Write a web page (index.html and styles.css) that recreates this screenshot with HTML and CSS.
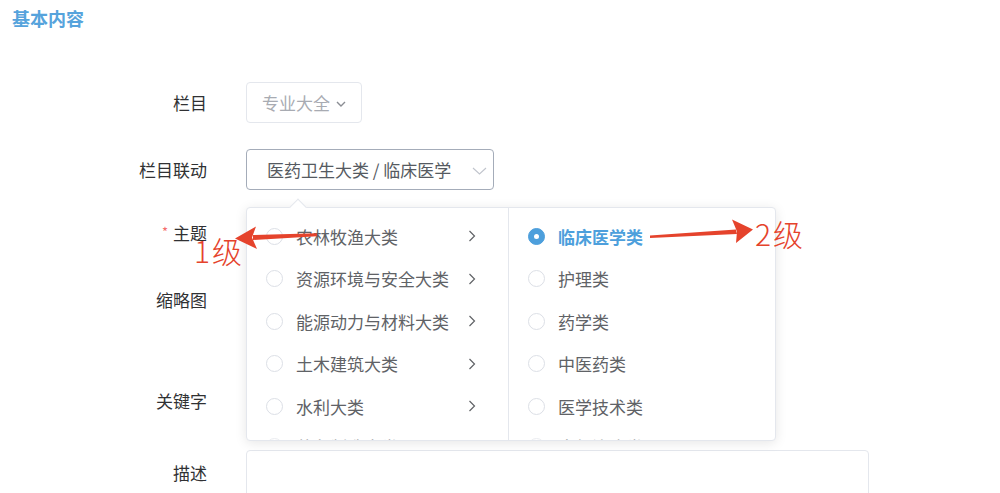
FILE: index.html
```html
<!DOCTYPE html>
<html lang="zh-CN">
<head>
<meta charset="utf-8">
<title>基本内容</title>
<link rel="stylesheet" href="styles.css">
</head>
<body>
<div class="page">
  <h2 class="section-title">基本内容</h2>
  <div class="form">
    <div class="row r1">
      <div class="label">栏目</div>
      <div class="control">
        <div class="select select-small">
          <span class="placeholder">专业大全</span>
          <svg class="chev-small" width="10" height="6" viewBox="0 0 10 6"><path d="M1 1 L5 5 L9 1" fill="none" stroke="#8a8d93" stroke-width="1.4"/></svg>
        </div>
      </div>
    </div>
    <div class="row r2">
      <div class="label">栏目联动</div>
      <div class="control">
        <div class="select select-wide">
          <span class="value">医药卫生大类 / 临床医学</span>
          <svg class="chev-wide" width="15" height="8" viewBox="0 0 15 8"><path d="M1 1 L7.5 7 L14 1" fill="none" stroke="#c0c4cc" stroke-width="1.1"/></svg>
        </div>
      </div>
    </div>
    <div class="row r3">
      <div class="label"><span class="req">*</span>主题</div>
      <div class="control"></div>
    </div>
    <div class="row r4">
      <div class="label">缩略图</div>
      <div class="control"></div>
    </div>
    <div class="row r5">
      <div class="label">关键字</div>
      <div class="control"></div>
    </div>
    <div class="row r6">
      <div class="label">描述</div>
      <div class="control"><div class="textarea"></div></div>
    </div>
  </div>

  <div class="cascader">
    <div class="popper-arrow"></div>
    <div class="menu menu-left">
      <div class="item"><span class="radio"></span><span class="text">农林牧渔大类</span><svg class="chev-right" width="8" height="12" viewBox="0 0 8 12"><path d="M1.5 1 L6.5 6 L1.5 11" fill="none" stroke="#606266" stroke-width="1.2"/></svg></div>
      <div class="item"><span class="radio"></span><span class="text">资源环境与安全大类</span><svg class="chev-right" width="8" height="12" viewBox="0 0 8 12"><path d="M1.5 1 L6.5 6 L1.5 11" fill="none" stroke="#606266" stroke-width="1.2"/></svg></div>
      <div class="item"><span class="radio"></span><span class="text">能源动力与材料大类</span><svg class="chev-right" width="8" height="12" viewBox="0 0 8 12"><path d="M1.5 1 L6.5 6 L1.5 11" fill="none" stroke="#606266" stroke-width="1.2"/></svg></div>
      <div class="item"><span class="radio"></span><span class="text">土木建筑大类</span><svg class="chev-right" width="8" height="12" viewBox="0 0 8 12"><path d="M1.5 1 L6.5 6 L1.5 11" fill="none" stroke="#606266" stroke-width="1.2"/></svg></div>
      <div class="item"><span class="radio"></span><span class="text">水利大类</span><svg class="chev-right" width="8" height="12" viewBox="0 0 8 12"><path d="M1.5 1 L6.5 6 L1.5 11" fill="none" stroke="#606266" stroke-width="1.2"/></svg></div>
      <div class="item"><span class="radio"></span><span class="text">装备制造大类</span><svg class="chev-right" width="8" height="12" viewBox="0 0 8 12"><path d="M1.5 1 L6.5 6 L1.5 11" fill="none" stroke="#606266" stroke-width="1.2"/></svg></div>
    </div>
    <div class="menu menu-right">
      <div class="item active"><span class="radio checked"></span><span class="text">临床医学类</span></div>
      <div class="item"><span class="radio"></span><span class="text">护理类</span></div>
      <div class="item"><span class="radio"></span><span class="text">药学类</span></div>
      <div class="item"><span class="radio"></span><span class="text">中医药类</span></div>
      <div class="item"><span class="radio"></span><span class="text">医学技术类</span></div>
      <div class="item"><span class="radio"></span><span class="text">康复治疗类</span></div>
    </div>
  </div>

  <svg class="annot" width="1000" height="493" viewBox="0 0 1000 493">
    <path d="M317 233.2 L253 235 L253 240 L317 236.2 Z" fill="#e5432c"/>
    <path d="M235 238.5 L256 226.5 L252 237.5 L257 249 Z" fill="#e5432c"/>
    <path d="M650 235.5 L736 229.5 L737 234 L650 238 Z" fill="#e5432c"/>
    <path d="M753 229.5 L732 219.5 L737 231.5 L736 243 Z" fill="#e5432c"/>
  </svg>
  <span class="note note-1">1级</span>
  <span class="note note-2">2级</span>
</div>
</body>
</html>
```

FILE: styles.css
```css
* { box-sizing: border-box; }

html, body {
  margin: 0;
  padding: 0;
  background: #ffffff;
}

body {
  font-family: "Noto Sans CJK SC", "Noto Sans", sans-serif;
  color: #303133;
  overflow: hidden;
}

.page {
  position: relative;
  width: 1000px;
  height: 493px;
  overflow: hidden;
}

.section-title {
  margin: 0;
  padding: 6px 0 0 12px;
  font-size: 18px;
  line-height: 24px;
  font-weight: 700;
  color: #56a3dc;
}

.form {
  margin-top: 52px;
  display: flex;
  flex-direction: column;
  gap: 22px;
}

.row {
  display: flex;
  align-items: flex-start;
}

.label {
  width: 207px;
  margin-right: 39px;
  text-align: right;
  font-size: 17px;
  line-height: 42px;
  color: #303133;
  flex-shrink: 0;
}

.req {
  color: #f56c6c;
  font-size: 13px;
  margin-right: 5px;
  position: relative;
  top: -3px;
}

.control {
  flex: 1;
}

.r1 { height: 45px; }
.r1 .label { line-height: 41px; }
.r2 { height: 41px; }
.r3 { height: 45px; }
.r4 { height: 79px; }
.r5 { height: 48px; }
.r6 .label { line-height: 46px; }

.select {
  display: flex;
  align-items: center;
  background: #fff;
  border-radius: 4px;
  font-size: 17px;
}

.select-small {
  width: 116px;
  height: 41px;
  border: 1px solid #e4e7ed;
  padding-left: 15px;
}

.placeholder {
  color: #a8abb2;
}

.chev-small {
  margin-left: 6px;
  margin-top: 2px;
}

.select-wide {
  width: 248px;
  height: 41px;
  border: 1px solid #a4acb9;
  padding-left: 20px;
  padding-right: 6px;
  justify-content: space-between;
}

.value {
  color: #555a61;
}

.chev-wide {
  margin-top: 2px;
}

.textarea {
  width: 623px;
  height: 90px;
  border: 1px solid #e4e7ed;
  border-radius: 4px;
}

.cascader {
  position: absolute;
  left: 246px;
  top: 207px;
  width: 530px;
  height: 234px;
  background: #fff;
  border: 1px solid #e4e7ed;
  border-radius: 4px;
  box-shadow: 0 2px 12px rgba(0, 0, 0, 0.1);
  display: flex;
}

.popper-arrow {
  position: absolute;
  left: 45px;
  top: -7px;
  width: 12px;
  height: 12px;
  background: #fff;
  border-left: 1px solid #e4e7ed;
  border-top: 1px solid #e4e7ed;
  transform: rotate(45deg);
}

.menu {
  height: 100%;
  overflow: hidden;
  padding-top: 7px;
  position: relative;
}

.menu-left {
  width: 262px;
  border-right: 1px solid #e4e7ed;
}

.menu-right {
  flex: 1;
}

.item {
  display: flex;
  align-items: center;
  height: 42.5px;
  padding-left: 19px;
  font-size: 17px;
  color: #606266;
}

.item:last-child {
  margin-top: -2px;
  opacity: 0.6;
}

.menu-left .item {
  padding-right: 32px;
}

.menu-right .item {
  padding-left: 19px;
}

.radio {
  width: 17px;
  height: 17px;
  border: 1px solid #dcdfe6;
  border-radius: 50%;
  flex-shrink: 0;
  margin-right: 13px;
  background: #fff;
}

.radio.checked {
  background: #4d9fdc;
  border-color: #4d9fdc;
  position: relative;
}

.radio.checked::after {
  content: "";
  position: absolute;
  left: 5px;
  top: 5px;
  width: 5px;
  height: 5px;
  background: #fff;
  border-radius: 50%;
}

.text {
  flex: 1;
  white-space: nowrap;
}

.item.active .text {
  color: #4d9fdc;
  font-weight: 700;
}

.chev-right {
  flex-shrink: 0;
}

.annot {
  position: absolute;
  left: 0;
  top: 0;
  pointer-events: none;
}

.note {
  position: absolute;
  font-size: 30px;
  line-height: 30px;
  color: #e5432c;
  font-weight: 300;
  white-space: nowrap;
  letter-spacing: 2px;
}

.note-1 {
  left: 194px;
  top: 235px;
}

.note-2 {
  left: 755px;
  top: 218px;
}
```
